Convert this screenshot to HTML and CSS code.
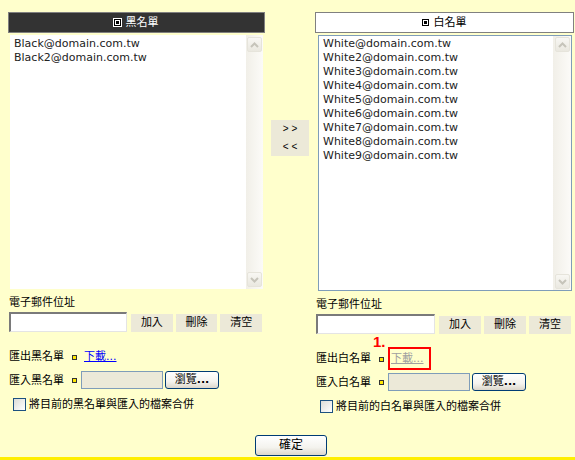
FILE: index.html
```html
<!DOCTYPE html>
<html>
<head>
<meta charset="utf-8">
<link rel="stylesheet" href="styles.css">
</head>
<body>
<div class="page">
  <div class="cols">
    <div class="col col-black">
      <div class="hdr hdr-dark"><span class="ico ico-dark"></span>黑名單</div>
      <div class="list list-black">
        <div class="items">
          <div>Black@domain.com.tw</div>
          <div>Black2@domain.com.tw</div>
        </div>
        <div class="sb">
          <div class="sb-btn"><svg width="9" height="6" viewBox="0 0 9 6"><polyline points="1,5 4.5,1.5 8,5" fill="none" stroke="#C6C4BA" stroke-width="2"/></svg></div>
          <div class="sb-btn"><svg width="9" height="6" viewBox="0 0 9 6"><polyline points="1,1 4.5,4.5 8,1" fill="none" stroke="#C6C4BA" stroke-width="2"/></svg></div>
        </div>
      </div>
      <div class="label">電子郵件位址</div>
      <div class="addrow">
        <span class="addr"></span>
        <button class="btn">加入</button>
        <button class="btn">刪除</button>
        <button class="btn">清空</button>
      </div>
      <div class="frow">
        <span class="flabel">匯出黑名單</span><span class="bullet"></span><a class="dl" href="#">下載...</a>
      </div>
      <div class="frow frow-import">
        <span class="flabel">匯入黑名單</span><span class="bullet"></span><span class="file"></span><button class="xpbtn browse">瀏覽<b>...</b></button>
      </div>
      <div class="merge"><span class="cb"></span><span class="merge-text">將目前的黑名單與匯入的檔案合併</span></div>
    </div>

    <div class="mid">
      <div class="move"><span>&gt; &gt;</span><span>&lt; &lt;</span></div>
    </div>

    <div class="col col-white">
      <div class="hdr hdr-light"><span class="ico"></span>白名單</div>
      <div class="list list-white">
        <div class="items">
          <div>White@domain.com.tw</div>
          <div>White2@domain.com.tw</div>
          <div>White3@domain.com.tw</div>
          <div>White4@domain.com.tw</div>
          <div>White5@domain.com.tw</div>
          <div>White6@domain.com.tw</div>
          <div>White7@domain.com.tw</div>
          <div>White8@domain.com.tw</div>
          <div>White9@domain.com.tw</div>
        </div>
        <div class="sb">
          <div class="sb-btn"><svg width="9" height="6" viewBox="0 0 9 6"><polyline points="1,5 4.5,1.5 8,5" fill="none" stroke="#C6C4BA" stroke-width="2"/></svg></div>
          <div class="sb-btn"><svg width="9" height="6" viewBox="0 0 9 6"><polyline points="1,1 4.5,4.5 8,1" fill="none" stroke="#C6C4BA" stroke-width="2"/></svg></div>
        </div>
      </div>
      <div class="label">電子郵件位址</div>
      <div class="addrow">
        <span class="addr"></span>
        <button class="btn">加入</button>
        <button class="btn">刪除</button>
        <button class="btn">清空</button>
      </div>
      <div class="frow">
        <span class="flabel">匯出白名單</span><span class="bullet"></span><span class="annot"><span class="num">1.</span><span class="box"></span><a class="dl dl-off" href="#">下載...</a></span>
      </div>
      <div class="frow frow-import">
        <span class="flabel">匯入白名單</span><span class="bullet"></span><span class="file"></span><button class="xpbtn browse">瀏覽<b>...</b></button>
      </div>
      <div class="merge"><span class="cb"></span><span class="merge-text">將目前的白名單與匯入的檔案合併</span></div>
    </div>
  </div>
  <div class="footer"><button class="xpbtn ok">確定</button></div>
</div>
<div class="bottombar"></div>
</body>
</html>
```
FILE: styles.css
```css
html, body {
  margin: 0;
  padding: 0;
}
body {
  background: #FFFFCC;
  font-family: "DejaVu Sans", "Noto Sans CJK TC", sans-serif;
  font-size: 11px;
  color: #000;
  overflow: hidden;
}
.page {
  padding: 12px 0 0 8px;
  width: 574px;
  box-sizing: border-box;
}
.cols {
  display: flex;
  align-items: flex-start;
}
.col-black { width: 257px; }
.col-white { width: 259px; }
.mid {
  width: 50px;
  padding-top: 108px;
  box-sizing: border-box;
}
.move {
  margin-left: 6px;
  width: 38px;
  height: 36px;
  background: #ECE9D8;
  display: flex;
  flex-direction: column;
  align-items: center;
  justify-content: center;
  gap: 4px;
  font-family: "Liberation Sans", sans-serif;
  font-size: 10px;
  line-height: 14px;
}
.hdr {
  height: 21px;
  box-sizing: border-box;
  border: 1px solid #808080;
  text-align: center;
  line-height: 19px;
  font-size: 11px;
}
.hdr-dark { background: #333333; color: #fff; }
.hdr-light { background: #fff; color: #000; }
.ico {
  display: inline-block;
  width: 3px;
  height: 3px;
  background: #000;
  border: 1px solid #fff;
  box-shadow: 0 0 0 1px #000;
  margin-right: 6px;
  vertical-align: 1px;
}
.ico-dark {
  box-shadow: 0 0 0 1px #000, 0 0 0 2px #fff;
}
.list {
  display: flex;
  margin-top: 2px;
  background: #fff;
}
.list-black {
  margin-left: 2px;
  width: 253px;
  height: 254px;
}
.list-white {
  margin-left: 3px;
  width: 254px;
  height: 256px;
  border: 1px solid #7F9DB9;
  box-sizing: border-box;
}
.items {
  flex: 1;
  padding: 2px 0 0 4px;
  line-height: 14px;
  color: #222;
  white-space: nowrap;
  overflow: hidden;
}
.list-white .items { padding-top: 1px; }
.sb {
  width: 17px;
  background: linear-gradient(to right, #F1EFE8, #FCFBF8);
  display: flex;
  flex-direction: column;
  justify-content: space-between;
  align-items: center;
  padding: 2px 0;
  box-sizing: border-box;
}
.list-white .sb { padding: 1px 0; width: 18px; }
.sb-btn {
  width: 15px;
  height: 15px;
  box-sizing: border-box;
  border: 1px solid #E6E4DB;
  border-radius: 2px;
  background: linear-gradient(#F8F7F3, #EAE8E0);
  display: flex;
  align-items: center;
  justify-content: center;
}
.label {
  margin: 7px 0 0 1px;
  line-height: 14px;
}
.addrow {
  display: flex;
  align-items: flex-end;
  margin: 2px 0 0 1px;
  height: 20px;
}
.addr {
  width: 119px;
  height: 20px;
  box-sizing: border-box;
  border-style: solid;
  border-width: 2px 1px 1px 2px;
  border-color: #7A7A7A #E4E4E4 #E4E4E4 #7A7A7A;
  background: #fff;
  margin-right: 4px;
}
.btn {
  width: 42px;
  height: 18px;
  padding: 0;
  border: none;
  background: #ECE9D8;
  font: inherit;
  color: #000;
  line-height: 18px;
  margin-right: 3px;
}
.frow {
  display: flex;
  align-items: center;
  margin: 18px 0 0 1px;
  height: 14px;
  line-height: 14px;
}
.frow-import {
  margin-top: 7px;
  height: 18px;
}
.frow-import .flabel { padding-top: 2px; }
.flabel { white-space: nowrap; }
.bullet {
  width: 5px;
  height: 5px;
  box-sizing: border-box;
  border: 1px solid #333;
  background: #FFE800;
  margin-left: 8px;
}
.dl {
  margin-left: 7px;
  color: #0000FF;
  text-decoration: underline;
}
.dl-off {
  margin-left: 0;
  color: #A0A0A0;
}
.annot {
  position: relative;
  margin-left: 7px;
  display: flex;
}
.annot .box {
  position: absolute;
  left: -3px;
  top: -5px;
  width: 43px;
  height: 23px;
  border: 2px solid #FF0000;
  box-sizing: border-box;
}
.annot .num {
  position: absolute;
  left: -18px;
  top: -18px;
  font-family: "Liberation Sans", sans-serif;
  font-size: 15px;
  font-weight: bold;
  line-height: 15px;
  color: #FF0000;
}
.file {
  width: 82px;
  height: 18px;
  box-sizing: border-box;
  border: 1px solid #7F9DB9;
  background: #ECE9D8;
  margin-left: 4px;
}
.xpbtn {
  box-sizing: border-box;
  border: 1px solid #003C74;
  border-radius: 3px;
  background: linear-gradient(180deg, #FFFFFF 0%, #F4F3EE 60%, #DCD7CB 100%);
  font: inherit;
  color: #000;
  padding: 0;
}
.browse {
  width: 54px;
  height: 18px;
  margin-left: 2px;
  line-height: 16px;
}
.browse b { font-weight: bold; }
.merge {
  display: flex;
  align-items: center;
  margin: 9px 0 0 5px;
  height: 13px;
  line-height: 14px;
}
.cb {
  width: 13px;
  height: 13px;
  box-sizing: border-box;
  border: 1px solid #1C5180;
  background: linear-gradient(135deg, #DCDCD7, #FFFFFF);
}
.merge-text { margin-left: 3px; white-space: nowrap; }
.footer {
  margin-top: 22px;
  display: flex;
  justify-content: center;
  width: 566px;
}
.ok {
  width: 72px;
  height: 21px;
  font-size: 12px;
  line-height: 19px;
}
.bottombar {
  margin-top: 1px;
  height: 3px;
  background: #FFEE00;
}
```
